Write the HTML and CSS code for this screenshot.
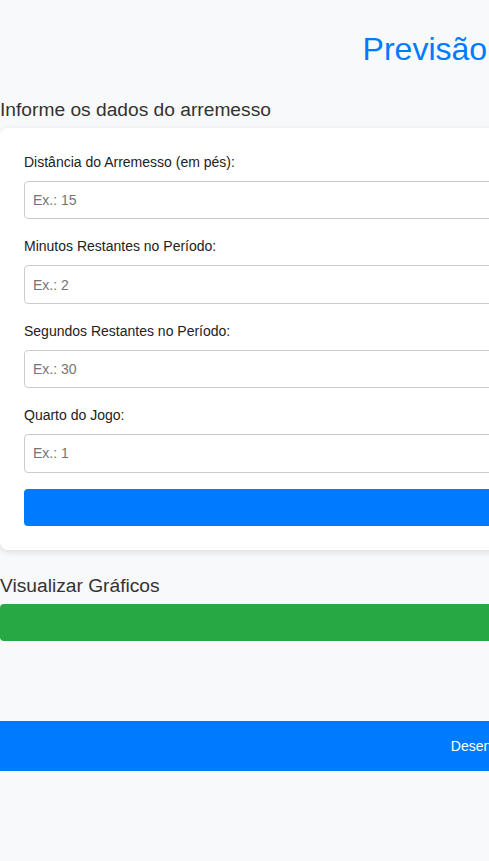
FILE: index.html
```html
<!DOCTYPE html>
<html lang="pt-BR">
<head>
<meta charset="utf-8">
<title>Previsão de Arremessos</title>
<link rel="stylesheet" href="styles.css">
</head>
<body>
<div class="page">
  <header class="header">
    <h1 class="title">Previsão de Arremessos</h1>
  </header>
  <main class="main">
    <h2 class="section-title">Informe os dados do arremesso</h2>
    <form class="card">
      <label class="label" for="dist">Distância do Arremesso (em pés):</label>
      <input class="input" id="dist" type="number" placeholder="Ex.: 15">
      <label class="label" for="min">Minutos Restantes no Período:</label>
      <input class="input" id="min" type="number" placeholder="Ex.: 2">
      <label class="label" for="seg">Segundos Restantes no Período:</label>
      <input class="input" id="seg" type="number" placeholder="Ex.: 30">
      <label class="label" for="qtr">Quarto do Jogo:</label>
      <input class="input input-last" id="qtr" type="number" placeholder="Ex.: 1">
      <button class="btn btn-primary" type="button">Prever</button>
    </form>
    <h2 class="section-title section-gap">Visualizar Gráficos</h2>
    <button class="btn btn-success" type="button">Ver Gráficos</button>
  </main>
  <footer class="footer">Desenvolvido por Grupo 10</footer>
</div>
</body>
</html>
```
FILE: styles.css
```css
html, body {
  margin: 0;
  padding: 0;
  overflow: hidden;
  background: #f8f9fa;
}
body {
  font-family: "Liberation Sans", Arial, sans-serif;
  color: #333;
}
.page {
  width: 1072px;
}
.header {
  padding-top: 31px;
}
.title {
  margin: 0;
  font-size: 32px;
  font-weight: normal;
  line-height: 37px;
  color: #007bff;
  text-align: center;
}
.main {
  padding-top: 30px;
}
.section-title {
  margin: 0 0 7px;
  font-size: 19.2px;
  font-weight: normal;
  line-height: 23px;
  color: #333;
}
.section-gap {
  margin-top: 24px;
}
.card {
  display: flex;
  flex-direction: column;
  background: #fff;
  border-radius: 8px;
  box-shadow: 0 2px 6px rgba(0, 0, 0, 0.12);
  padding: 24px;
}
.label {
  font-size: 14px;
  line-height: 20px;
  margin-bottom: 9px;
  color: #222;
}
.input {
  box-sizing: border-box;
  height: 38.4px;
  margin: 0 0 17px;
  padding: 10px 8px;
  border: 1px solid #ccc;
  border-radius: 4px;
  font-family: inherit;
  font-size: 14px;
  background: #fff;
}
.input-last {
  margin-bottom: 16px;
}
.input::placeholder {
  color: #757575;
}
.btn {
  display: block;
  width: 100%;
  height: 37px;
  border: none;
  border-radius: 4px;
  color: #fff;
  font-family: inherit;
  font-size: 14px;
}
.btn-primary {
  background: #007bff;
}
.btn-success {
  background: #28a745;
}
.footer {
  margin-top: 80px;
  height: 50px;
  line-height: 50px;
  background: #007bff;
  color: #fff;
  font-size: 14px;
  text-align: center;
}
```
